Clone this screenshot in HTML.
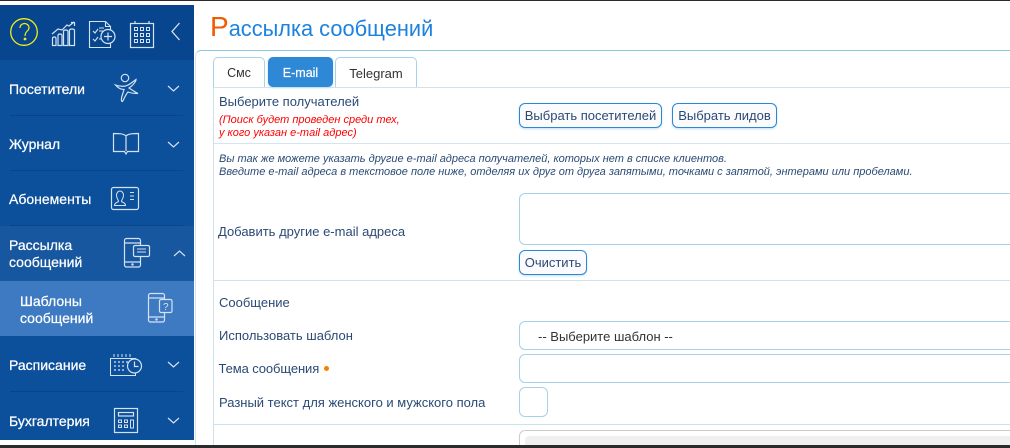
<!DOCTYPE html>
<html lang="ru"><head><meta charset="utf-8"><title>Рассылка сообщений</title>
<style>
html,body{margin:0;padding:0;width:1010px;height:448px;overflow:hidden;background:#fff}
body{position:relative;font-family:"Liberation Sans",sans-serif;color:#2a4a75;font-size:13px}
.a{position:absolute;white-space:nowrap}
.box{position:absolute;box-sizing:border-box;background:#fff}
.line{position:absolute;height:1px;left:214px;right:0}
.m{position:absolute;color:#fff;font-size:14px;line-height:23px;font-weight:400;white-space:nowrap;-webkit-text-stroke:.25px #fff}
.sep{position:absolute;left:10px;width:173px;height:1px;background:#0a4388}
svg{position:absolute;overflow:visible;fill:none;stroke:#d4e3f3;stroke-width:1.2}
.btn{position:absolute;box-sizing:border-box;height:25px;border:1px solid #2b86d6;border-radius:6px;background:#fbfbfd;box-shadow:0 1px 2px #bfe0f5;font-size:13px;line-height:23px;text-align:center;color:#2a4a75;white-space:nowrap}
.tab{position:absolute;top:57px;height:30px;box-sizing:border-box;border:1px solid #a9d2ea;border-bottom:0;border-radius:5px 5px 0 0;background:#fff;text-align:center;line-height:31px;color:#333;font-size:12.5px}
.in{position:absolute;left:519px;width:500px;box-sizing:border-box;border:1px solid #a5d2e9;border-radius:6px;background:#fff}
</style></head><body>
<div class="a" style="left:0;top:0;width:1010px;height:1px;background:#2b2b2b"></div>

<div class="a" style="left:0;top:5px;width:194px;height:435px;background:#0c4f9b"></div>
<div class="a" style="left:0;top:5px;width:194px;height:55px;background:#07468e"></div>
<div class="a" style="left:0;top:226px;width:194px;height:55px;background:#17579f"></div>
<div class="a" style="left:0;top:281px;width:194px;height:55px;background:#3d7ac2"></div>

<svg style="left:0;top:0" width="194" height="60">
<circle cx="24" cy="32" r="13.3" stroke="#f0ee14" stroke-width="1.3"/>
<path d="M20 28c0-6 9-6 9 0 0 3-4 3-4 8" stroke="#f0ee14"/><circle cx="25" cy="39" r=".8" fill="#f0ee14" stroke="#f0ee14"/>
<path d="M52.500 45.500v-7c0-2 3.500-2 3.500 0v7zM58 45.500v-10c0-2 4-2 4 0v10zM63.500 45.500v-14c0-2 4.500-2 4.500 0v14zM69.500 45.500v-15c0-2 5-2 5 0v15z"/>
<path d="M52 34l6-5 4 1 5-5 2 1 5-4M71 22.500h3.500v3.500"/>
<path d="M110.500 42v5.500h-21v-26h16l5 5v4M105.500 21.500v5h5M93 31l2 2 3-4M93 39l2 2 3-4M99 31h4M99 39h3M99 28h5" stroke-width="1.100"/>
<circle cx="108" cy="36.500" r="7" fill="#07468e"/><path d="M108 32.500v8M104 36.500h8"/>
<rect x="130.500" y="23.500" width="23" height="24"/><path d="M135 21v3M149 21v3"/>
<path d="M134.500 27.500h3v3h-3zM140.500 27.500h3v3h-3zM146.500 27.500h3v3h-3zM134.500 33.500h3v3h-3zM140.500 33.500h3v3h-3zM146.500 33.500h3v3h-3zM134.500 39.500h3v3h-3zM140.500 39.500h3v3h-3zM146.500 39.500h3v3h-3z" stroke-width="1"/>
<path d="M179.500 23l-7.500 8.500 7.500 8.500" stroke-width="1.300"/>
<circle cx="125" cy="78" r="3.700"/>
<path d="M115.500 85c4 1.500 7 1.500 10 1 4-1 7-4 10.500-6.500 0 2-3 6-7 8.500 3 2 6 4 9 5.500-4 0-7.500-.5-10-1.500-2 2-3 5-5.500 9.500-1.500 0-1.500-3 0-7l1.500-5c-3 0-6-1.500-8.500-4.500z"/>
<path d="M168 86l5.500 5 5.500-5M168 142l5.500 5 5.500-5M168 362l5.500 5 5.500-5M168 418l5.500 5 5.500-5" stroke-width="1.200"/>
<path d="M174 256l5.500-5 5.500 5" stroke-width="1.200"/>
<path d="M113.500 133.500c5 0 10 0 12.500 2.500 2.500-2.500 7.500-2.500 12.500-2.500v18h-11l-1.500 2.500-1.500-2.500h-11zM126 136v15"/>
<rect x="111.500" y="187.500" width="27" height="22" rx="2"/>
<path d="M114.500 205.500c0-3 3-3 4-4 .5-1-2-3-2-6 0-6 7-6 7 0 0 3-2.500 5-2 6 1 1 4 1 4 4zM130 192.500h4M130 196h4M130 199.500h4" stroke-width="1"/>
<rect x="124.500" y="238.500" width="16" height="28.500" rx="2"/><path d="M124.500 243h16M124.500 262h16"/><circle cx="132.500" cy="264.500" r=".6"/>
<rect x="133.500" y="245.500" width="16" height="11" rx="1.500" fill="#17579f"/><path d="M137 249h9M137 252h9" stroke-width="1"/>
<rect x="148.500" y="293.500" width="16" height="28.500" rx="2"/><path d="M148.500 298h16M148.500 317h16"/><circle cx="156.500" cy="319.500" r=".6"/>
<rect x="159.500" y="299.500" width="12.500" height="13" rx="1.500" fill="#3d7ac2"/>
<path d="M110.500 358.500h25v17h-25zM114 354v3M118 354v3M122 354v3M126 354v3M130 354v3" stroke-width="1"/>
<path d="M114 362h2M118 362h2M122 362h2M126 362h2M114 366h2M118 366h2M122 366h2M114 370h2M118 370h2M122 370h2" stroke-width="1.300"/>
<circle cx="134.500" cy="366" r="7" fill="#0c4f9b"/><path d="M134.500 361.500v5h4"/>
<rect x="114.500" y="408.500" width="23" height="24"/>
<rect x="118.500" y="412.500" width="15" height="3.500"/>
<path d="M118.500 420h3v2.500h-3zM124.500 420h3v2.500h-3zM118.500 425h3v2.500h-3zM124.500 425h3v2.500h-3zM130.500 420h3v8h-3z" stroke-width="1"/>
</svg>
<svg style="left:0;top:0" width="194" height="340"><text x="163" y="310" font-family="Liberation Sans" font-size="10" fill="#d4e3f3" stroke="none">?</text></svg>

<div class="m" style="left:9px;top:78px">Посетители</div>
<div class="sep" style="top:115px"></div>
<div class="m" style="left:9px;top:133px">Журнал</div>
<div class="sep" style="top:170px"></div>
<div class="m" style="left:9px;top:188px">Абонементы</div>
<div class="sep" style="top:225px"></div>
<div class="m" style="left:9px;top:237px;line-height:17px">Рассылка<br>сообщений</div>
<div class="m" style="left:20px;top:293px;line-height:16.500px">Шаблоны<br>сообщений</div>
<div class="m" style="left:9px;top:354px">Расписание</div>
<div class="sep" style="top:391px"></div>
<div class="m" style="left:9px;top:410px">Бухгалтерия</div>

<div class="a" style="left:210px;top:12px;font-size:21.800px;line-height:30px;color:#1b82df"><span style="color:#f05a00;font-size:28px">Р</span>ассылка сообщений</div>

<div class="box" style="left:195px;top:50px;width:830px;height:420px;border:1px solid #8cc8e0;border-radius:6px 0 0 0;border-width:1px 0 0 1px;border-left-color:#cfe5f0"></div>
<div class="a" style="left:213px;top:87px;width:1px;height:358px;background:#cfe0ec"></div>
<div class="line" style="top:87px;background:#d5e2ec"></div>
<div class="tab" style="left:213px;width:52px">Смс</div>
<div class="tab" style="left:268px;width:65px;background:#2f88d6;border-color:#2f88d6;color:#fff;border-radius:5px;box-shadow:0 1px 2px #bfe0f5;-webkit-text-stroke:.2px #fff">E-mail</div>
<div class="tab" style="left:335px;width:82px;font-size:13px">Telegram</div>

<div class="a" style="left:219px;top:94px;line-height:15px">Выберите получателей</div>
<div class="a" style="left:219px;top:114px;font-size:11px;line-height:12.500px;font-style:italic;color:#f00">(Поиск будет проведен среди тех,<br>у кого указан e-mail адрес)</div>
<div class="btn" style="left:519px;top:103px;width:143px">Выбрать посетителей</div>
<div class="btn" style="left:672px;top:103px;width:105px">Выбрать лидов</div>
<div class="line" style="top:143px;background:#d3e4f3"></div>
<div class="a" style="left:219px;top:153px;font-size:11px;line-height:12.500px;font-style:italic;color:#2a4a75">Вы так же можете указать другие e-mail адреса получателей, которых нет в списке клиентов.<br>Введите e-mail адреса в текстовое поле ниже, отделяя их друг от друга запятыми, точками с запятой, энтерами или пробелами.</div>
<div class="a" style="left:218px;top:224px;line-height:15px">Добавить другие e-mail адреса</div>
<div class="in" style="top:193px;height:52px"></div>
<div class="btn" style="left:519px;top:250px;width:68px">Очистить</div>
<div class="line" style="top:280px;background:#d5e2ec"></div>
<div class="a" style="left:219px;top:295px;line-height:15px">Сообщение</div>
<div class="a" style="left:219px;top:328px;line-height:15px">Использовать шаблон</div>
<div class="in" style="top:321px;height:29px;color:#333;line-height:29px;padding-left:18px;font-size:13px">-- Выберите шаблон --</div>
<div class="a" style="left:218.500px;top:361px;line-height:15px;letter-spacing:-.1px">Тема сообщения</div>
<div class="a" style="left:324px;top:366px;width:5px;height:5px;border-radius:50%;background:#f98006"></div>
<div class="in" style="top:354px;height:29px"></div>
<div class="a" style="left:219px;top:395px;line-height:15px">Разный текст для женского и мужского пола</div>
<div class="in" style="top:387px;width:29px;height:30px"></div>
<div class="line" style="top:424px;background:#c8e3f0"></div>
<div class="in" style="top:430px;height:30px;border-color:#ccc"></div>
<div class="a" style="left:525px;top:436px;width:490px;height:9px;background:#f0f0f0;border-radius:4px 0 0 0"></div>
<div class="a" style="left:0;top:445px;width:1010px;height:3px;background:#2b2b2b"></div>
</body></html>
